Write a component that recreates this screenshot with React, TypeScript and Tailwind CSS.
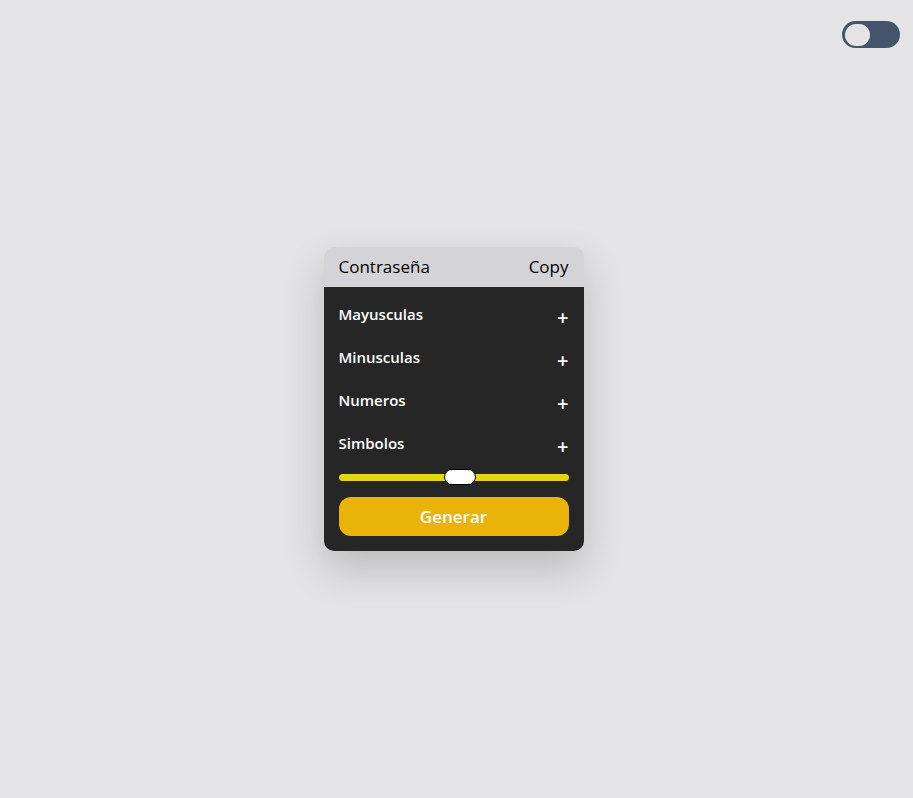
import { useState } from "react";

// ─── Option Row ──────────────────────────────────────────────────────────────

const OptionRow = ({ label }: { label: string }) => (
  <div className="flex h-6 items-start justify-between">
    <span className="text-[15px] font-semibold leading-6 text-white">{label}</span>
    <button className="mt-[4px] text-xl font-semibold leading-6 text-white" aria-label={`Add ${label}`}>
      +
    </button>
  </div>
);

// ─── Length Slider ───────────────────────────────────────────────────────────

const LengthSlider = ({ value }: { value: number }) => (
  <div className="relative flex h-4 items-center">
    <div className="h-[7px] w-full rounded-full bg-[#e3d50f]" />
    <div
      className="absolute top-0 h-4 w-8 -translate-x-1/2 rounded-full border border-black bg-white"
      style={{ left: `${value}%` }}
    />
  </div>
);

export default function App() {
  const [dark] = useState(false);
  const options = ["Mayusculas", "Minusculas", "Numeros", "Simbolos"];

  return (
    <div
      className="relative flex min-h-screen items-center justify-center bg-[#e4e4e7] pr-[6px]"
      style={{ fontFamily: '"Open Sans", "Noto Sans", sans-serif' }}
    >
      {/* Theme toggle */}
      <button
        className="absolute right-[13px] top-[21px] flex h-[27px] w-[58px] items-center rounded-full bg-[#44546a] px-[3px]"
        aria-label="Toggle theme"
      >
        <span className={`h-[22px] w-[25px] rounded-full bg-[#e4e4e7] ${dark ? "ml-auto" : ""}`} />
      </button>

      {/* Card */}
      <div className="w-[260px] overflow-hidden rounded-[10px] shadow-[0_18px_40px_rgba(0,0,0,0.18)]">
        <div className="flex h-10 items-center justify-between bg-[#d4d4d8] px-[15px] text-[17px] font-medium text-black">
          <span>Contraseña</span>
          <button>Copy</button>
        </div>

        <div className="flex flex-col bg-[#262626] p-[15px]">
          <div className="flex flex-col gap-[19px]">
            {options.map((o) => (
              <OptionRow key={o} label={o} />
            ))}
          </div>

          <div className="mt-[14px]">
            <LengthSlider value={53} />
          </div>

          <button className="mt-3 h-[39px] w-full rounded-xl bg-[#eab308] text-[17px] font-semibold text-white">
            Generar
          </button>
        </div>
      </div>
    </div>
  );
}
